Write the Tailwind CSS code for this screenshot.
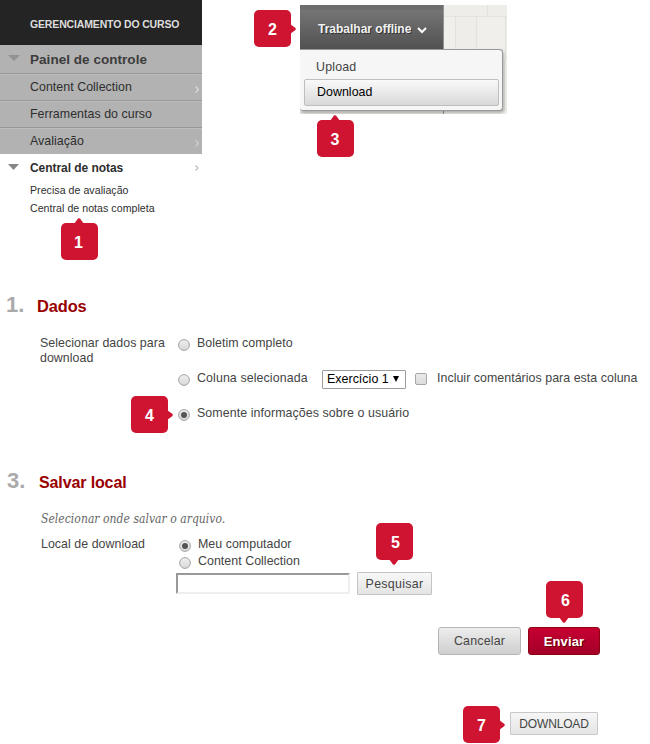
<!DOCTYPE html>
<html lang="pt-BR">
<head>
<meta charset="utf-8">
<title>Central de notas</title>
<script src="https://cdn.jsdelivr.net/npm/@tailwindcss/browser@4"></script>
</head>
<body class="bg-white">
<main class="relative w-[650px] h-[744px] overflow-hidden bg-white font-['Liberation_Sans',Arial,sans-serif] text-[12.4px] leading-[15px] tracking-[0.04px] text-[#444] whitespace-nowrap">

  <div class="flex h-[284px] items-start">
    <nav class="w-[202px] text-[#2e2e2e]">
      <h2 class="flex h-[45px] items-center bg-[#242424] pl-[30px] pt-[3px] text-[10.5px] font-bold text-[#ddd] tracking-[-0.15px]">GERENCIAMENTO DO CURSO</h2>
      <div class="flex h-[29px] items-center border-b border-[#969696] bg-[#b2b2b2] pl-[8px]">
        <svg class="mb-[3px] w-[12px] h-[6px]" viewBox="0 0 12 6"><path d="M0 0h12L6 6z" fill="#929292"/></svg>
        <span class="ml-[10px] text-[13.5px] font-bold text-[#3c3c3c]">Painel de controle</span>
      </div>
      <div class="flex h-[27px] items-center justify-between border-b border-[#969696] border-t border-t-[#bdbdbd] bg-[#b2b2b2] pl-[30px] pr-[3px]"><span>Content Collection</span><svg class="mt-[3px] w-[4px] h-[7px]" viewBox="0 0 4 7" fill="none" stroke="#d8d8d8" stroke-width="1.5"><path d="M.5.5l3 3-3 3"/></svg></div>
      <div class="flex h-[27px] items-center border-b border-[#969696] border-t border-t-[#bdbdbd] bg-[#b2b2b2] pl-[30px]">Ferramentas do curso</div>
      <div class="flex h-[26px] items-center justify-between border-t border-t-[#bdbdbd] bg-[#b2b2b2] pl-[30px] pr-[3px]"><span>Avaliação</span><svg class="mt-[3px] w-[4px] h-[7px]" viewBox="0 0 4 7" fill="none" stroke="#ccc" stroke-width="1.5"><path d="M.5.5l3 3-3 3"/></svg></div>
      <div class="flex h-[28px] items-center pl-[8px] pr-[3px]">
        <svg class="mb-[2px] w-[11px] h-[6px]" viewBox="0 0 11 6"><path d="M0 0h11L5.500 6z" fill="#868686"/></svg>
        <span class="ml-[11px] flex-1 font-bold text-[12px] tracking-[-0.05px]">Central de notas</span>
        <svg class="w-[4px] h-[6px]" viewBox="0 0 4 6" fill="none" stroke="#bbb" stroke-width="1.200"><path d="M.5.5l2.500 2.500-2.500 2.500"/></svg>
      </div>
      <ul class="pl-[30px] text-[10.6px] leading-[18px] -mt-px"><li>Precisa de avaliação</li><li>Central de notas completa</li></ul>
    </nav>

    <div class="relative ml-[98px] mt-[5px] h-[109px] w-[207px] overflow-hidden bg-[#eeede9]">
      <svg class="absolute inset-0 w-[207px] h-[109px]" viewBox="0 0 207 109">
        <path d="M143 11.500h64M143 44.500h64M143 54.500h64M143 105.500h64" stroke="#e5e3df"/>
        <path d="M155.500 11v33M187.500 0v11M176.500 11v33M205.500 11v45M204.500 56v50" stroke="#e3e1dd"/>
        <path d="M145 12h10v31h-10zM178 12h26v31h-26z" fill="#f0efeb"/>
        <path d="M0 107h143v2H0z" fill="#e8e6e3"/>
        <path d="M143.500 0v109" stroke="#949494"/>
      </svg>
      <div class="relative flex h-[44px] w-[143px] items-center border-t-[5px] border-[#6d6d6d] bg-linear-to-b from-[#757575] to-[#515151] pl-[18px] text-white">
        <span class="text-[12px] font-bold tracking-normal text-[#f2f2f2] [text-shadow:1px_1px_0_#333]">Trabalhar offline</span>
        <svg class="ml-[6px] mt-[1px] w-[10px] h-[7px]" viewBox="0 0 10 7" fill="none" stroke="#fff" stroke-width="2"><path d="M1 1l4 4 4-4"/></svg>
      </div>
      <div class="relative flex h-[62px] w-[203px] flex-col rounded-r-[4px] rounded-bl-[3px] border border-l-0 border-[#999] bg-[#f6f6f6] pt-[1px] shadow-[1px_2px_3px_#0004]">
        <div class="flex h-[28px] items-center pl-[16px] pt-[4px] tracking-[0.2px]">Upload</div>
        <div class="ml-[4px] flex h-[27px] w-[195px] items-center rounded-[2px] border border-[#bebebe] bg-linear-to-b from-[#f9f9f9] to-[#d9d9d9] pl-[12px] text-black">Download</div>
      </div>
    </div>
  </div>

  <section class="h-[177px]">
    <h1 class="flex items-baseline pt-[8px] pl-[6px] leading-[26px] font-bold"><span class="w-[31px] text-[22px] text-[#aaa]">1.</span><span class="text-[16.4px] tracking-[-0.1px] text-[#990000]">Dados</span></h1>
    <div class="flex pl-[40px] pt-[17px]">
      <p class="w-[138px]">Selecionar dados para<br>download</p>
      <div>
        <label class="flex h-[35px] items-start"><svg class="mt-[3px] mr-[7px] size-[12px]"><use href="#off"/></svg>Boletim completo</label>
        <div class="flex h-[35px] items-start">
          <svg class="mt-[3px] mr-[7px] size-[12px]"><use href="#off"/></svg><span class="w-[111px] tracking-[0.1px]">Coluna selecionada</span>
          <div class="ml-[14px] -mt-[1px] flex h-[19px] w-[84px] items-center justify-between rounded-[1px] border border-[#9c9c9c] pl-[4px] pr-[6px] text-black"><span>Exercício 1</span><svg class="mb-[1px] w-[6px] h-[6px]" viewBox="0 0 6 6"><path d="M0 0h6L3 6z"/></svg></div>
          <span class="ml-[9px] mt-[2px] size-[12px] rounded-[2px] border border-[#a6a6a6] bg-linear-to-b from-[#eaeaea] to-[#dcdcdc]"></span>
          <span class="ml-[10px]">Incluir comentários para esta coluna</span>
        </div>
        <label class="flex items-start tracking-[0.08px]"><svg class="mt-[3px] mr-[7px] size-[12px]"><use href="#on"/></svg>Somente informações sobre o usuário</label>
      </div>
    </div>
  </section>

  <section>
    <h1 class="flex items-baseline pt-[7px] pl-[7px] leading-[26px] font-bold"><span class="w-[32px] text-[22px] text-[#aaa]">3.</span><span class="text-[16px] tracking-[-0.12px] text-[#990000]">Salvar local</span></h1>
    <p class="pl-[41px] pt-[15px] font-['DejaVu_Serif_Condensed','DejaVu_Serif',serif] text-[12px] italic leading-[16px] tracking-[0.04px] text-[#666]">Selecionar onde salvar o arquivo.</p>
    <div class="flex pl-[41px] pt-[10px]">
      <p class="w-[138px]">Local de download</p>
      <div>
        <label class="flex h-[17px] items-start"><svg class="mt-[3px] mr-[7px] size-[12px]"><use href="#on"/></svg>Meu computador</label>
        <label class="flex h-[17px] items-start"><svg class="mt-[3px] mr-[7px] size-[12px]"><use href="#off"/></svg>Content Collection</label>
      </div>
    </div>
    <div class="flex pl-[176px] pt-[1px]">
      <div class="mt-[1px] h-[21px] w-[174px] border-2 border-t-[#999] border-l-[#999] border-r-[#eee] border-b-[#eee]"></div>
      <button class="ml-[7px] h-[23px] w-[75px] rounded-[1px] border border-[#c4c4c4] bg-linear-to-b from-[#f8f8f8] to-[#e4e4e4] pt-px tracking-[0.3px]">Pesquisar</button>
    </div>
    <div class="flex gap-[7px] pl-[438px] pt-[32px]">
      <button class="h-[28px] w-[83px] rounded-[3px] border border-[#b5b5b5] bg-linear-to-b from-[#ededed] to-[#cfcfcf] tracking-[0.2px]">Cancelar</button>
      <button class="h-[28px] w-[72px] rounded-[3px] border border-[#8c0010] bg-linear-to-b from-[#c70032] to-[#a30028] text-[13px] font-bold text-white tracking-[0.15px] [text-shadow:1px_1px_0_#600]">Enviar</button>
    </div>
    <div class="flex pl-[510px] pt-[57px]"><button class="h-[23px] w-[88px] rounded-[1px] border border-[#c8c8c8] bg-linear-to-b from-[#f6f6f6] to-[#e5e5e5] pt-px text-[12px] tracking-[-0.15px]">DOWNLOAD</button></div>
  </section>

  <!-- Numbered step callouts -->
  <div class="absolute left-[61px] top-[223px] flex size-[37px] items-center justify-center rounded-[5px] bg-[#ce1431] text-[16px] font-bold text-white pt-[2px] pr-[2px]">1<svg class="absolute -top-[5px] left-[13px] w-[10px] h-[6px]" viewBox="0 0 10 6"><path d="M0 6L4 .5Q5 0 6 .5L10 6z" fill="#ce1431"/></svg></div>
  <div class="absolute left-[254px] top-[10px] flex size-[37px] items-center justify-center rounded-[5px] bg-[#ce1431] text-[16px] font-bold text-white pt-[1px]">2<svg class="absolute left-[36px] top-[14px] w-[6px] h-[10px]" viewBox="0 0 6 10"><path d="M0 0L5.500 4Q6 5 5.500 6L0 10z" fill="#ce1431"/></svg></div>
  <div class="absolute left-[317px] top-[120px] flex size-[37px] items-center justify-center rounded-[5px] bg-[#ce1431] text-[16px] font-bold text-white pt-[2px] pr-[1px]">3<svg class="absolute -top-[5px] left-[13px] w-[10px] h-[6px]" viewBox="0 0 10 6"><path d="M0 6L4 .5Q5 0 6 .5L10 6z" fill="#ce1431"/></svg></div>
  <div class="absolute left-[131px] top-[396px] flex size-[37px] items-center justify-center rounded-[5px] bg-[#ce1431] text-[16px] font-bold text-white pt-[1px]">4<svg class="absolute left-[36px] top-[14px] w-[6px] h-[10px]" viewBox="0 0 6 10"><path d="M0 0L5.500 4Q6 5 5.500 6L0 10z" fill="#ce1431"/></svg></div>
  <div class="absolute left-[376px] top-[523px] flex size-[37px] items-center justify-center rounded-[5px] bg-[#ce1431] text-[16px] font-bold text-white pt-[2px] pl-[2px]">5<svg class="absolute top-[36px] left-[13px] w-[10px] h-[6px]" viewBox="0 0 10 6"><path d="M0 0L4 5.500Q5 6 6 5.500L10 0z" fill="#ce1431"/></svg></div>
  <div class="absolute left-[546px] top-[581px] flex size-[37px] items-center justify-center rounded-[5px] bg-[#ce1431] text-[16px] font-bold text-white pt-[2px] pl-[2px]">6<svg class="absolute top-[36px] left-[13px] w-[10px] h-[6px]" viewBox="0 0 10 6"><path d="M0 0L4 5.500Q5 6 6 5.500L10 0z" fill="#ce1431"/></svg></div>
  <div class="absolute left-[463px] top-[706px] flex size-[37px] items-center justify-center rounded-[5px] bg-[#ce1431] text-[16px] font-bold text-white pt-[2px]">7<svg class="absolute left-[36px] top-[14px] w-[6px] h-[10px]" viewBox="0 0 6 10"><path d="M0 0L5.500 4Q6 5 5.500 6L0 10z" fill="#ce1431"/></svg></div>

  <svg class="absolute w-0 h-0">
    <defs>
      <linearGradient id="g" x2="0" y2="1"><stop stop-color="#eee"/><stop offset="1" stop-color="#d8d8d8"/></linearGradient>
      <symbol id="off" viewBox="0 0 12 12"><circle cx="6" cy="6" r="5.400" fill="url(#g)" stroke="#a4a4a4"/></symbol>
      <symbol id="on" viewBox="0 0 12 12"><circle cx="6" cy="6" r="5.400" fill="url(#g)" stroke="#a4a4a4"/><circle cx="6" cy="6" r="3" fill="#555"/></symbol>
    </defs>
  </svg>
</main>
</body>
</html>
